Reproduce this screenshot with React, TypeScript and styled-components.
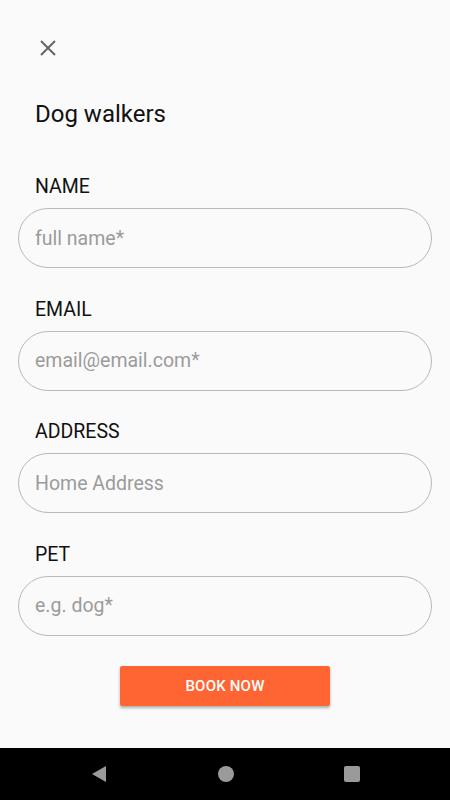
import styled, { createGlobalStyle } from "styled-components";

const GlobalStyle = createGlobalStyle`
  html, body {
    margin: 0;
    padding: 0;
    background: #fafafa;
    font-family: Roboto, "Noto Sans", sans-serif;
  }
`;

const Screen = styled.div`
  width: 450px;
  height: 800px;
  display: flex;
  flex-direction: column;
  background: #fafafa;
`;
const Content = styled.div`
  flex: 1;
  display: flex;
  flex-direction: column;
  padding: 0 18px;
`;
const CloseButton = styled.button`
  width: 30px;
  height: 30px;
  margin: 33px 0 0 15px;
  padding: 0;
  border: none;
  background: none;
  display: flex;
  align-items: center;
  justify-content: center;
  cursor: pointer;
`;
const Title = styled.h1`
  margin: 36px 0 0 17px;
  font-size: 24px;
  font-weight: 400;
  line-height: 30px;
  color: #111;
`;
const Form = styled.form`
  display: flex;
  flex-direction: column;
  margin-top: 45px;
`;
const Field = styled.div`
  display: flex;
  flex-direction: column;
  margin-bottom: 28.5px;
`;
const Label = styled.label`
  margin-left: 17px;
  font-size: 19.5px;
  line-height: 26px;
  color: #111;
  margin-bottom: 8px;
`;
const Input = styled.input`
  box-sizing: border-box;
  width: 414px;
  height: 60px;
  border: 1px solid #b8b8b8;
  border-radius: 30px;
  background: transparent;
  padding: 0 16px;
  font-family: Roboto, "Noto Sans", sans-serif;
  font-size: 19.5px;
  color: #222;
  outline: none;
  &::placeholder {
    color: #9b9b9b;
  }
`;
const BookButton = styled.button`
  align-self: center;
  width: 210px;
  height: 40px;
  margin-top: 2px;
  border: none;
  border-radius: 2px;
  background: #ff6433;
  color: #fff;
  font-family: Roboto, "Noto Sans", sans-serif;
  font-size: 15px;
  font-weight: 500;
  letter-spacing: 0.2px;
  box-shadow: 0 2px 3px rgba(0, 0, 0, 0.3);
  cursor: pointer;
`;
const NavBar = styled.div`
  height: 52px;
  background: #000;
  display: flex;
  align-items: center;
  justify-content: space-between;
  padding: 0 89px 0 90px;
`;

const fields = [
  { label: "NAME", placeholder: "full name*" },
  { label: "EMAIL", placeholder: "email@email.com*" },
  { label: "ADDRESS", placeholder: "Home Address" },
  { label: "PET", placeholder: "e.g. dog*" },
];

export default function App() {
  return (
    <>
      <GlobalStyle />
      <Screen>
        <Content>
          <CloseButton aria-label="close">
            <svg width="16" height="16" viewBox="0 0 16 16">
              <path d="M1 1 L15 15 M15 1 L1 15" stroke="#666" strokeWidth="2" />
            </svg>
          </CloseButton>
          <Title>Dog walkers</Title>
          <Form onSubmit={(e) => e.preventDefault()}>
            {fields.map((f) => (
              <Field key={f.label}>
                <Label>{f.label}</Label>
                <Input placeholder={f.placeholder} />
              </Field>
            ))}
            <BookButton type="submit">BOOK NOW</BookButton>
          </Form>
        </Content>
        <NavBar>
          <svg width="18" height="18" viewBox="0 0 18 18">
            <path d="M16 1 L16 17 L2 9 Z" fill="#9a9a9a" />
          </svg>
          <svg width="18" height="18" viewBox="0 0 18 18">
            <circle cx="9" cy="9" r="8" fill="#9a9a9a" />
          </svg>
          <svg width="18" height="18" viewBox="0 0 18 18">
            <rect x="1" y="1" width="16" height="16" rx="2" fill="#9a9a9a" />
          </svg>
        </NavBar>
      </Screen>
    </>
  );
}
